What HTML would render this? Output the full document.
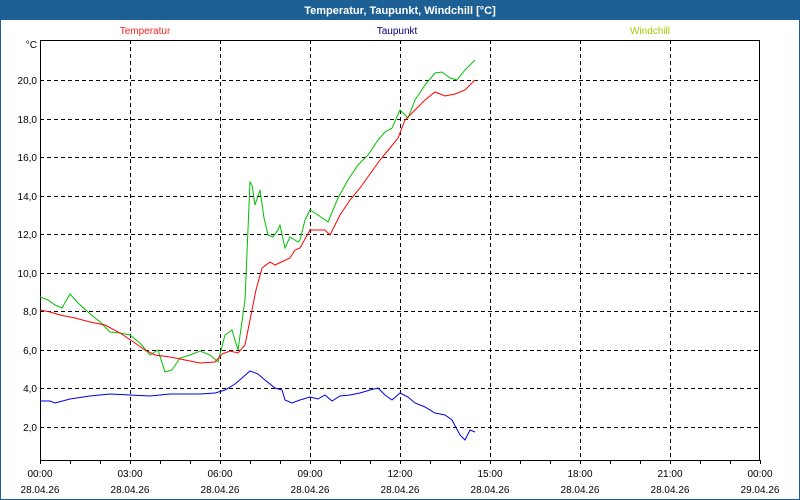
<!DOCTYPE html>
<html><head><style>
body{margin:0;width:800px;height:500px;overflow:hidden;background:#fff;font-family:"Liberation Sans",sans-serif}
</style></head><body>
<svg width="800" height="500" xmlns="http://www.w3.org/2000/svg" style="display:block" font-family="Liberation Sans, sans-serif">
<rect x="0" y="0" width="800" height="500" fill="#fff"/>
<rect x="0.5" y="0.5" width="799" height="499" fill="none" stroke="#1c6096"/>
<rect x="0" y="0" width="800" height="20" fill="#1c6096"/>
<text x="400" y="14" fill="#fff" font-size="11" font-weight="bold" text-anchor="middle">Temperatur, Taupunkt, Windchill [°C]</text>
<text x="145" y="34" fill="#ff2020" font-size="10" text-anchor="middle">Temperatur</text>
<text x="397" y="34" fill="#000080" font-size="10" text-anchor="middle">Taupunkt</text>
<text x="650" y="34" fill="#a0d000" font-size="10" text-anchor="middle">Windchill</text>
<g stroke="#000" stroke-dasharray="4,3" stroke-width="1">
<path d="M130.5 40V460M220.5 40V460M310.5 40V460M400.5 40V460M490.5 40V460M580.5 40V460M670.5 40V460"/>
<path d="M40 80.5H760M40 119.5H760M40 157.5H760M40 196.5H760M40 234.5H760M40 273.5H760M40 311.5H760M40 350.5H760M40 388.5H760M40 427.5H760"/>
</g>
<rect x="40.5" y="40.5" width="719" height="420" fill="none" stroke="#000"/>
<g stroke="#000"><path d="M40.5 460v4M70.5 460v4M100.5 460v4M130.5 460v4M160.5 460v4M190.5 460v4M220.5 460v4M250.5 460v4M280.5 460v4M310.5 460v4M340.5 460v4M370.5 460v4M400.5 460v4M430.5 460v4M460.5 460v4M490.5 460v4M520.5 460v4M550.5 460v4M580.5 460v4M610.5 460v4M640.5 460v4M670.5 460v4M700.5 460v4M730.5 460v4M760.5 460v4"/></g>
<g font-size="10" fill="#000" text-anchor="end">
<text x="37" y="48">°C</text>
<text x="37" y="84">20,0</text><text x="37" y="123">18,0</text><text x="37" y="161">16,0</text><text x="37" y="200">14,0</text><text x="37" y="238">12,0</text><text x="37" y="277">10,0</text><text x="37" y="315">8,0</text><text x="37" y="354">6,0</text><text x="37" y="392">4,0</text><text x="37" y="431">2,0</text>
</g>
<g font-size="10" fill="#000" text-anchor="middle">
<text x="40" y="477">00:00</text><text x="130" y="477">03:00</text><text x="220" y="477">06:00</text><text x="310" y="477">09:00</text><text x="400" y="477">12:00</text><text x="490" y="477">15:00</text><text x="580" y="477">18:00</text><text x="670" y="477">21:00</text><text x="760" y="477">00:00</text>
<text x="40" y="493">28.04.26</text><text x="130" y="493">28.04.26</text><text x="220" y="493">28.04.26</text><text x="310" y="493">28.04.26</text><text x="400" y="493">28.04.26</text><text x="490" y="493">28.04.26</text><text x="580" y="493">28.04.26</text><text x="670" y="493">28.04.26</text><text x="760" y="493">29.04.26</text>
</g>
<g fill="none" stroke-width="1">
<polyline stroke="#0000e0" points="40,401 50,401 55,403 70,399 90,396 110,394 130,395 150,396 170,394 190,394 200,394 215,393 225,390 235,384 242,378 250,371 258,374 265,380 275,388 282,390 285,400 292,403 300,400 310,397 318,399 325,395 332,401 340,396 350,395 360,393 370,390 378,388 385,395 392,400 400,393 408,397 415,403 425,407 435,413 445,415 452,420 460,435 465,440 470,430 475,432"/>
<polyline stroke="#00c000" points="40,297 48,300 55,305 62,308 70,294 78,303 88,312 100,322 110,332 120,333 130,335 140,343 150,355 158,350 165,372 172,370 180,358 190,355 200,351 210,355 218,362 225,335 232,330 238,350 245,300 250,182 252,185 255,205 260,190 264,218 268,235 273,237 278,230 280,225 285,248 290,237 298,242 300,240 305,220 310,210 318,215 328,222 338,198 348,180 358,165 368,155 378,140 385,132 392,128 400,110 408,118 415,100 425,85 435,73 442,72 450,78 457,80 465,70 475,60"/>
<polyline stroke="#ff0000" points="40,310 50,312 60,315 75,318 90,322 105,325 120,333 135,343 145,350 155,355 170,357 185,360 200,363 215,362 222,354 230,351 238,353 245,345 250,320 256,290 262,268 270,262 275,265 290,258 295,250 300,248 310,230 325,230 330,235 340,215 350,200 360,188 370,174 380,160 390,148 398,138 405,120 415,110 425,100 435,92 445,96 455,94 465,90 475,80"/>
</g>
</svg>
</body></html>
